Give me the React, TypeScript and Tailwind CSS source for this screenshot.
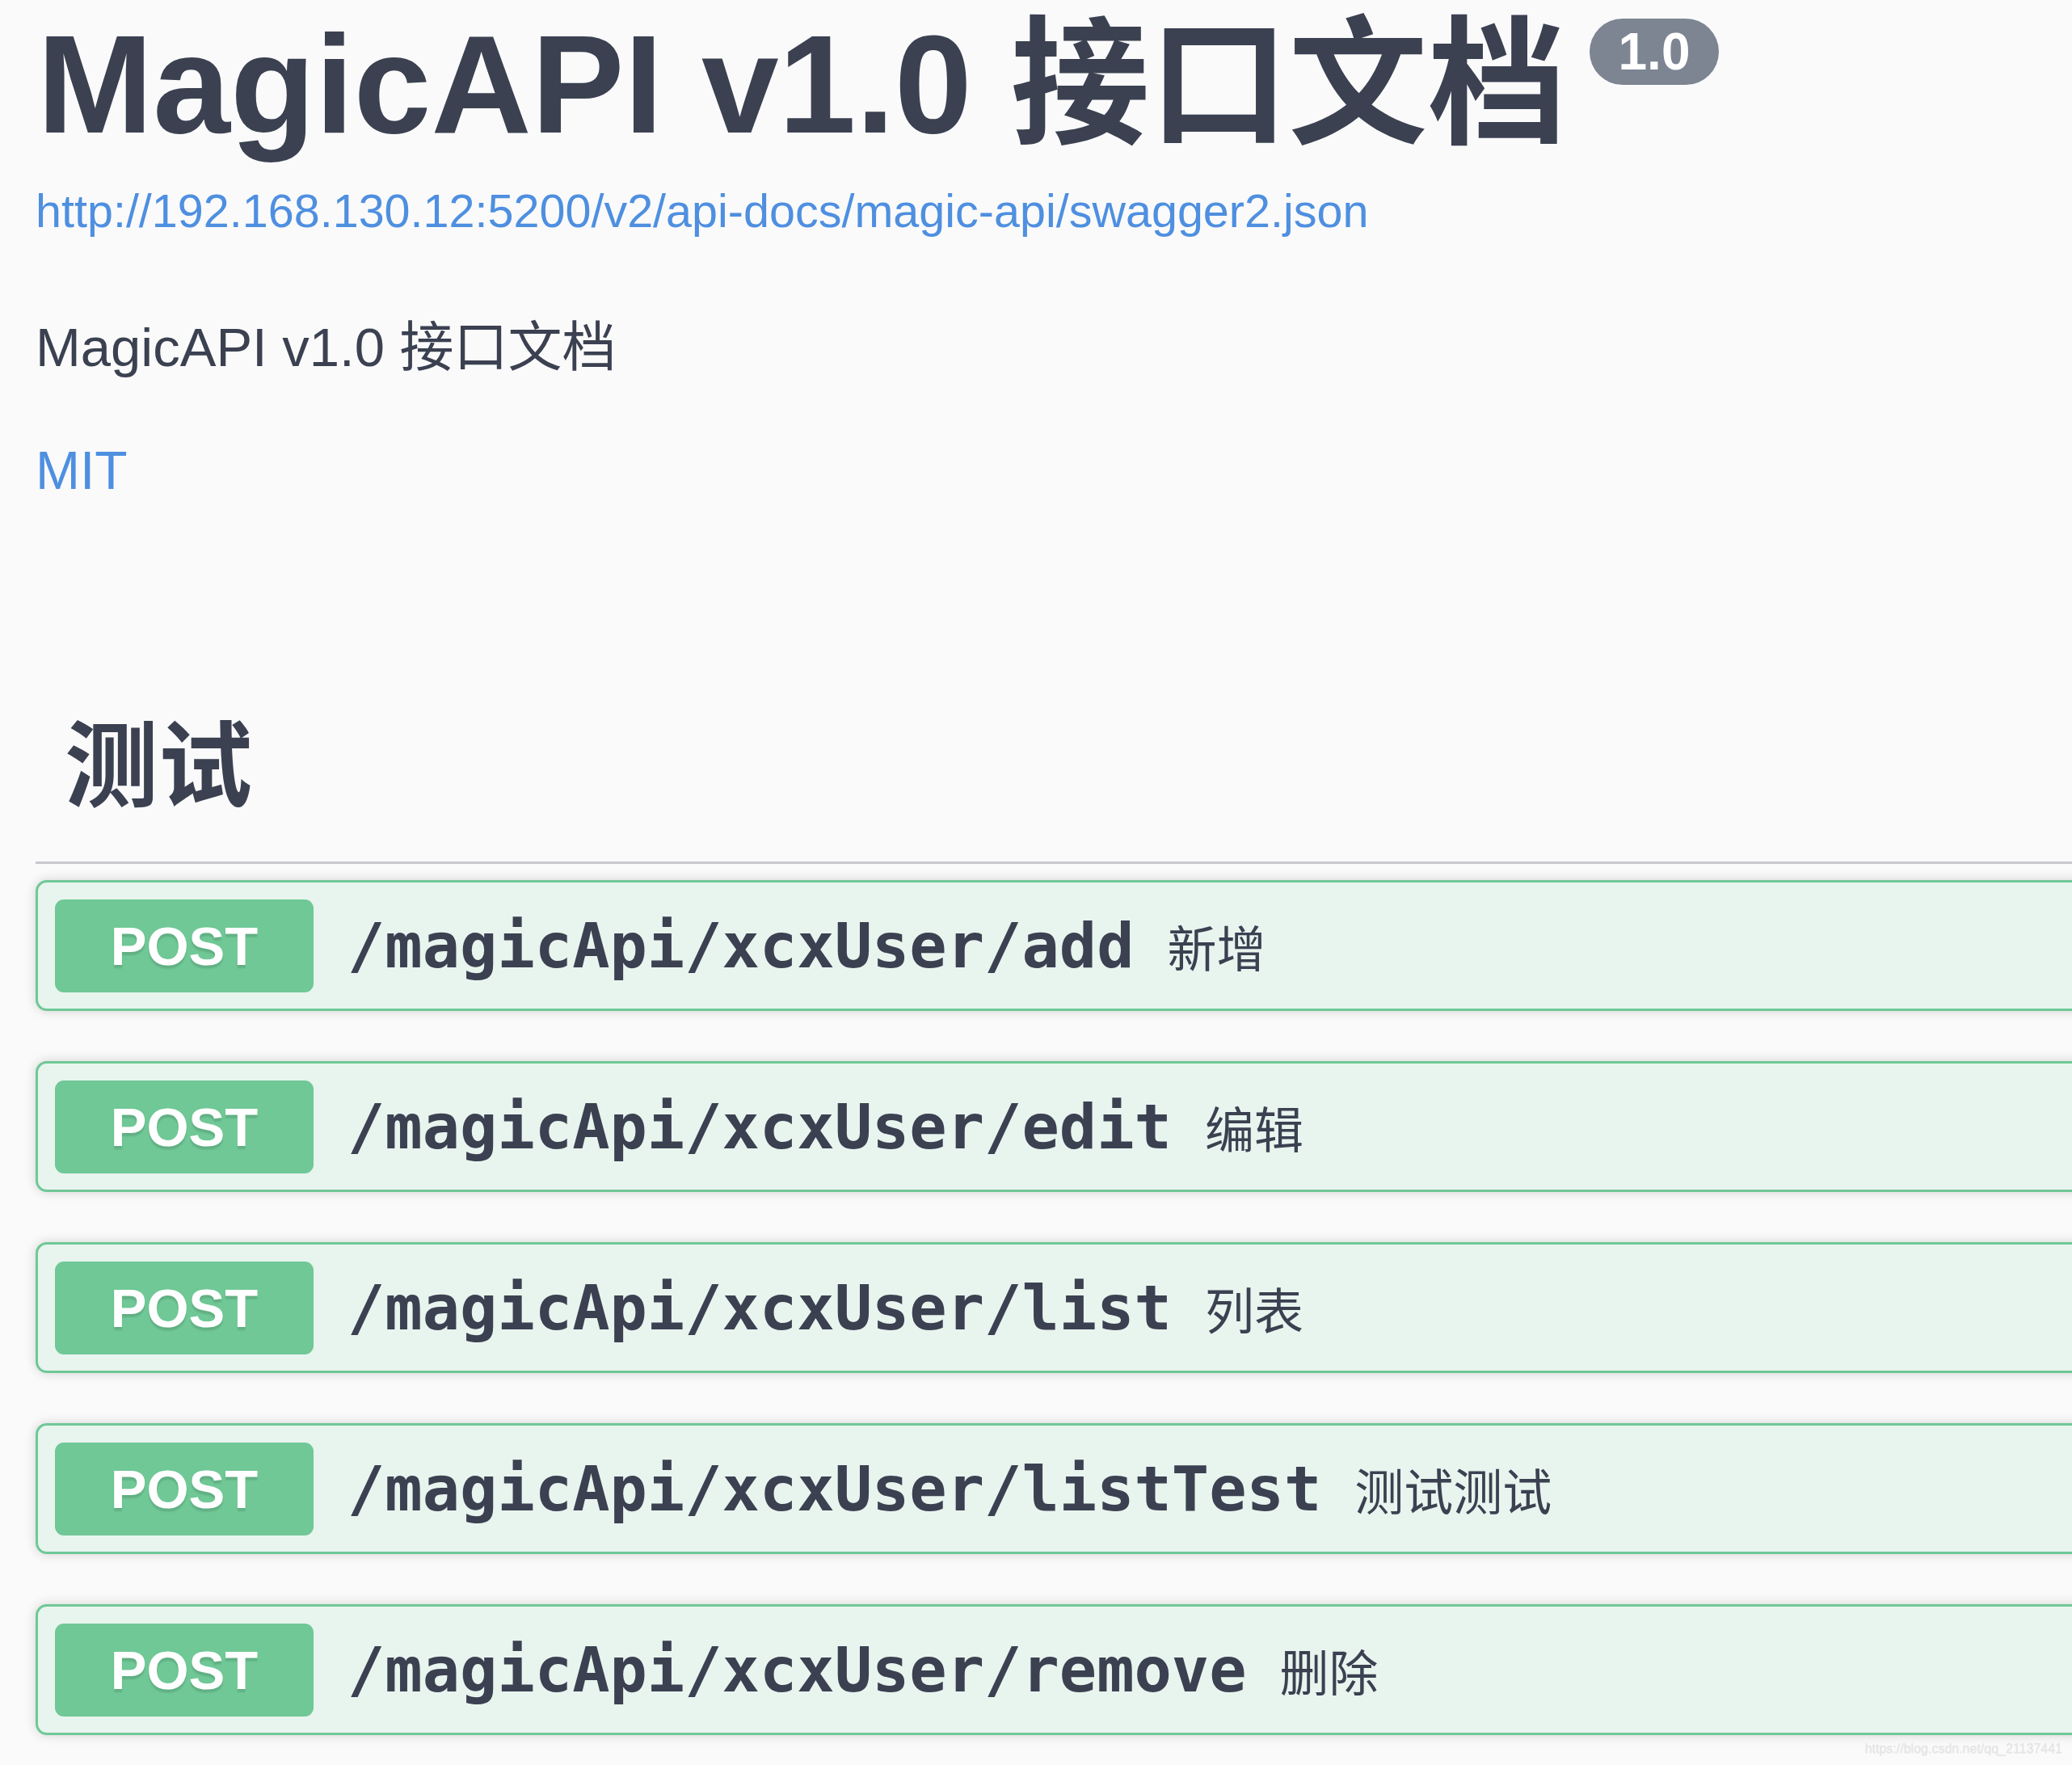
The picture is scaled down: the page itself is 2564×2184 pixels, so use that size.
import React from 'react';

const ops = [
  { path: '/magicApi/xcxUser/add', desc: '新增' },
  { path: '/magicApi/xcxUser/edit', desc: '编辑' },
  { path: '/magicApi/xcxUser/list', desc: '列表' },
  { path: '/magicApi/xcxUser/listTest', desc: '测试测试' },
  { path: '/magicApi/xcxUser/remove', desc: '删除' },
];

const sans = "font-['Liberation_Sans','Noto_Sans_CJK_SC',sans-serif]";

function OpRow({ path, desc }: { path: string; desc: string }) {
  return (
    <div className="flex h-[162px] items-center rounded-[14px] border-[3px] border-[#6fc896] bg-[#e8f4ee] pl-[21px] shadow-[0_0_14px_rgba(0,0,0,0.16)]">
      <div className={`flex h-[115px] w-[320px] shrink-0 items-center justify-center rounded-[11px] bg-[#6fc896] text-[67px] font-bold leading-none text-white [text-shadow:0_4px_2px_rgba(0,0,0,0.12)] ${sans}`}>
        POST
      </div>
      <span className="ml-[42px] font-['DejaVu_Sans_Mono',monospace] text-[77px] font-bold leading-none text-[#3b4151]">
        {path}
      </span>
      <span className="ml-[41px] font-['Noto_Sans_CJK_SC',sans-serif] text-[61px] leading-none text-[#3b4151]">
        {desc}
      </span>
    </div>
  );
}

export default function App() {
  return (
    <div className={`relative h-[2184px] w-full overflow-hidden bg-[#fafafa] px-[44px] ${sans}`}>
      {/* info */}
      <div className="pt-[18px]">
        <h2 className="flex items-start text-[172px] font-bold leading-[172px] text-[#3b4151]">
          <span className="ml-[2px]">MagicAPI v1.0 接口文档</span>
          <span className="ml-[28px] mt-[5px] rounded-full bg-[#7d8492] px-[36px] text-[64px] leading-[82px] font-bold text-white">
            1.0
          </span>
        </h2>
        <a className="mt-[36px] block text-[57.5px] leading-[70px] text-[#4e8fe0]">
          http://192.168.130.12:5200/v2/api-docs/magic-api/swagger2.json
        </a>
        <p className="mt-[94px] text-[67px] leading-[80px] text-[#3b4151]">MagicAPI v1.0 接口文档</p>
        <a className="mt-[72px] block text-[66px] leading-[80px] text-[#4e8fe0]">MIT</a>
      </div>

      {/* tag section */}
      <h3 className="-mr-[44px] mt-[257px] border-b-[3px] border-[#c8c9cd] pb-[47px] pl-[36px] text-[116px] font-bold leading-[140px] text-[#3b4151]">
        测试
      </h3>
      <div className="-mr-[80px] mt-[20px] flex flex-col gap-[62px]">
        {ops.map((op) => (
          <OpRow key={op.path} path={op.path} desc={op.desc} />
        ))}
      </div>

      <div className="absolute bottom-[8px] right-[12px] font-['Liberation_Sans',sans-serif] text-[16px] text-[#e4e4e4] [text-shadow:0_1px_1px_rgba(0,0,0,0.06)]">
        https://blog.csdn.net/qq_21137441
      </div>
    </div>
  );
}
